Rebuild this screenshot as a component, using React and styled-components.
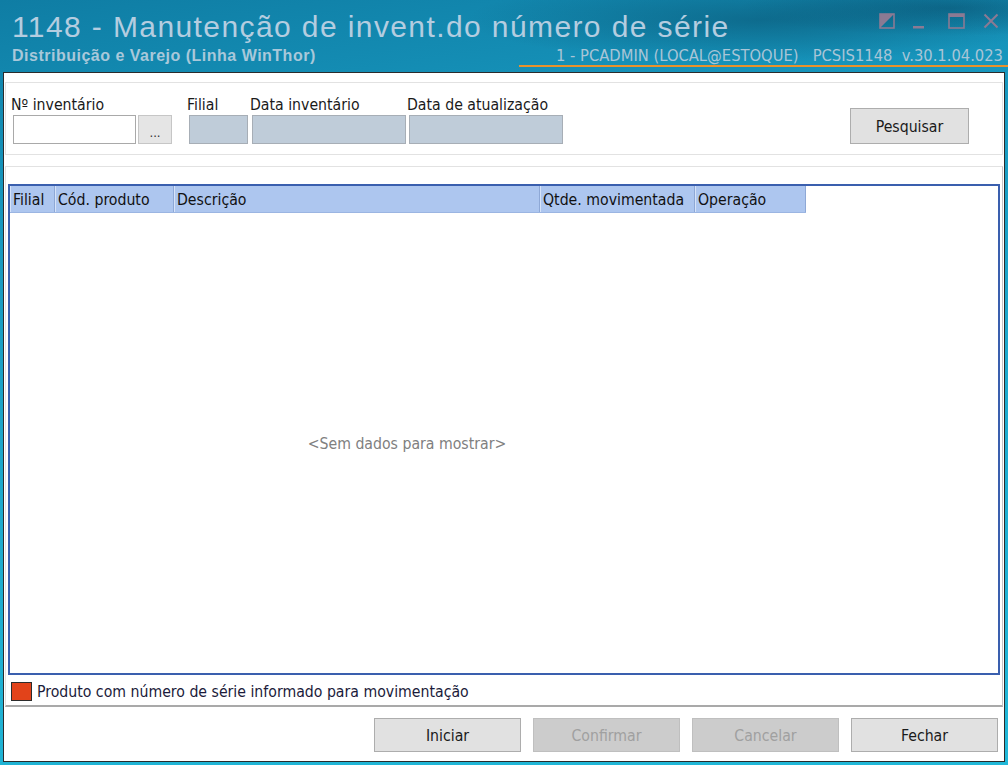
import React from "react";
import styled, { createGlobalStyle } from "styled-components";

const GlobalStyle = createGlobalStyle`
  html, body { margin: 0; padding: 0; }
  body { font-family: "DejaVu Sans Condensed", "DejaVu Sans", sans-serif; }
  * { box-sizing: border-box; }
`;

const uiFont = "15.7px";

const Window = styled.div`
  width: 1008px;
  height: 765px;
  display: flex;
  flex-direction: column;
  overflow: hidden;
  background:
    radial-gradient(ellipse 420px 60px at 760px 20px, rgba(8, 80, 110, 0.55), rgba(8, 80, 110, 0) 70%),
    radial-gradient(ellipse 300px 40px at 950px 8px, rgba(6, 70, 100, 0.5), rgba(6, 70, 100, 0) 70%),
    linear-gradient(172deg, #0f7da4 0%, #1796bd 22%, #1eaacd 55%, #21b8d8 100%);
`;

const TitleBar = styled.header`
  height: 72px;
  flex: none;
  display: flex;
  flex-direction: column;
`;

const TitleRow = styled.div`
  display: flex;
  align-items: flex-start;
  justify-content: space-between;
  height: 46px;
  padding: 11px 9px 0 12px;
`;

const Title = styled.h1`
  margin: 0;
  font-family: "Liberation Sans", Arial, sans-serif;
  font-weight: normal;
  font-size: 30px;
  letter-spacing: 1.4px;
  line-height: 32px;
  color: #b4cde0;
  white-space: nowrap;
`;

const Controls = styled.div`
  display: flex;
  align-items: flex-start;
  margin-top: 2px;
`;

const ControlButton = styled.span`
  display: flex;
  margin-left: ${(p) => p.$gap || 0}px;
`;

const SubRow = styled.div`
  display: flex;
  align-items: flex-end;
  justify-content: space-between;
  padding-left: 12px;
  height: 26px;
`;

const Subtitle = styled.div`
  font-family: "Liberation Sans", Arial, sans-serif;
  font-weight: bold;
  font-size: 16px;
  letter-spacing: 0.5px;
  line-height: 18px;
  color: #a9c8da;
  padding-bottom: 7px;
  white-space: nowrap;
`;

const SessionInfo = styled.div`
  width: 489px;
  border-bottom: 2px solid #e8922c;
  font-family: "Liberation Sans Narrow", "DejaVu Sans Condensed", sans-serif;
  font-stretch: condensed;
  font-size: 16.4px;
  line-height: 18px;
  color: #a9c5d7;
  text-align: right;
  padding: 0 5px 0 0;
  white-space: pre;
  margin-bottom: 5px;
`;

const Body = styled.main`
  flex: 1;
  margin: 0 3px 3px 3px;
  border: 1px solid #2b2b2b;
  background: #ffffff;
  display: flex;
  flex-direction: column;
  padding: 9px 1px 9px 1px;
  gap: 11px;
`;

const Panel = styled.section`
  border: 1px solid #e2e2e2;
  display: flex;
`;

const SearchPanel = styled(Panel)`
  height: 73px;
  padding: 12px 33px 10px 7px;
  align-items: flex-end;
`;

const Fields = styled.div`
  display: flex;
  align-items: flex-end;
  flex: 1;
`;

const Field = styled.div`
  display: flex;
  flex-direction: column;
  margin-left: ${(p) => p.$gap || 0}px;
`;

const Label = styled.label`
  font-size: ${uiFont};
  line-height: 19px;
  color: #1a1a1a;
  margin-left: -2px;
  margin-bottom: 1px;
  white-space: nowrap;
`;

const InputRow = styled.div`
  display: flex;
  gap: 2px;
`;

const TextBox = styled.div`
  width: ${(p) => p.$w}px;
  height: 29px;
  border: 1px solid ${(p) => (p.$readOnly ? "#a7aeb6" : "#a9a9a9")};
  background: ${(p) => (p.$readOnly ? "#bfccd9" : "#ffffff")};
`;

const Ellipsis = styled.button`
  width: 34px;
  height: 29px;
  border: 1px solid #c6c6c6;
  background: #e5e5e5;
  font-family: inherit;
  font-size: 13px;
  color: #333;
  padding: 6px 0 0;
  line-height: 14px;
`;

const Button = styled.button`
  width: ${(p) => p.$w || 147}px;
  height: ${(p) => p.$h || 34}px;
  border: 1px solid ${(p) => (p.disabled ? "#bfbfbf" : "#adadad")};
  background: ${(p) => (p.disabled ? "#cccccc" : "#e1e1e1")};
  color: ${(p) => (p.disabled ? "#a0a0a0" : "#1a1a1a")};
  font-family: inherit;
  font-size: ${uiFont};
  padding: 0;
`;

const GridPanel = styled(Panel)`
  flex: 1;
  min-height: 0;
  flex-direction: column;
  border-right-color: #c4c4c4;
  border-bottom: 2px solid #a9a9a9;
  padding: 17px 2px 0 2px;
`;

const Grid = styled.div`
  flex: 1;
  border: 2px solid #3a5fae;
  display: flex;
  flex-direction: column;
`;

const HeaderRow = styled.div`
  display: flex;
  height: 27px;
  width: fit-content;
  background: #adc6ef;
  border-bottom: 1px solid #9bb5e2;
`;

const HeaderCell = styled.div`
  width: ${(p) => p.$w}px;
  border-right: 1px solid #8ea8d6;
  box-shadow: inset 1px 0 0 #d6e3f9;
  font-size: ${uiFont};
  line-height: 27px;
  padding-left: 3px;
  color: #111;
  white-space: nowrap;
  overflow: hidden;
`;

const EmptyArea = styled.div`
  flex: 1;
  width: 794px;
  display: flex;
  align-items: center;
  justify-content: center;
  font-size: ${uiFont};
  color: #808080;
`;

const Legend = styled.div`
  display: flex;
  align-items: center;
  gap: 5px;
  height: 30px;
  padding: 3px 0 0 3px;
  font-size: ${uiFont};
  color: #1b1b3a;
`;

const Swatch = styled.span`
  width: 21px;
  height: 19px;
  background: ${(p) => p.$color};
  border: 1px solid #2c2c2c;
`;

const Actions = styled.footer`
  display: flex;
  justify-content: flex-end;
  gap: 12px;
  padding-right: 5px;
`;

const iconColor = "#8b7a93";

const RestoreIcon = () => (
  <svg width="16" height="16" viewBox="0 0 16 16">
    <path d="M1 1 H15 L1 15 Z" fill={iconColor} />
    <rect x="1" y="1" width="14" height="14" fill="none" stroke={iconColor} strokeWidth="1.6" />
  </svg>
);

const MinimizeIcon = () => (
  <svg width="12" height="16" viewBox="0 0 12 16">
    <rect x="0" y="13" width="11" height="2.5" fill={iconColor} />
  </svg>
);

const MaximizeIcon = () => (
  <svg width="17" height="16" viewBox="0 0 17 16">
    <rect x="1" y="1" width="15" height="14" fill="none" stroke={iconColor} strokeWidth="1.6" />
    <rect x="1" y="1" width="15" height="3" fill={iconColor} />
  </svg>
);

const CloseIcon = () => (
  <svg width="16" height="16" viewBox="0 0 16 16">
    <path d="M1.5 1.5 L14.5 14.5 M14.5 1.5 L1.5 14.5" stroke={iconColor} strokeWidth="2" />
  </svg>
);

const columns = [
  { title: "Filial", w: 45 },
  { title: "Cód. produto", w: 119 },
  { title: "Descrição", w: 366 },
  { title: "Qtde. movimentada", w: 155 },
  { title: "Operação", w: 111 },
];

export default function App() {
  return (
    <>
      <GlobalStyle />
      <Window>
        <TitleBar>
          <TitleRow>
            <Title>1148 - Manutenção de invent.do número de série</Title>
            <Controls>
              <ControlButton><RestoreIcon /></ControlButton>
              <ControlButton $gap={18}><MinimizeIcon /></ControlButton>
              <ControlButton $gap={23}><MaximizeIcon /></ControlButton>
              <ControlButton $gap={18}><CloseIcon /></ControlButton>
            </Controls>
          </TitleRow>
          <SubRow>
            <Subtitle>Distribuição e Varejo (Linha WinThor)</Subtitle>
            <SessionInfo>{"1 - PCADMIN (LOCAL@ESTOQUE)   PCSIS1148  v.30.1.04.023"}</SessionInfo>
          </SubRow>
        </TitleBar>

        <Body>
          <SearchPanel>
            <Fields>
              <Field>
                <Label>Nº inventário</Label>
                <InputRow>
                  <TextBox $w={123} />
                  <Ellipsis>...</Ellipsis>
                </InputRow>
              </Field>
              <Field $gap={17}>
                <Label>Filial</Label>
                <TextBox $w={59} $readOnly />
              </Field>
              <Field $gap={4}>
                <Label>Data inventário</Label>
                <TextBox $w={154} $readOnly />
              </Field>
              <Field $gap={3}>
                <Label>Data de atualização</Label>
                <TextBox $w={154} $readOnly />
              </Field>
            </Fields>
            <Button $w={119} $h={36}>Pesquisar</Button>
          </SearchPanel>

          <GridPanel>
            <Grid>
              <HeaderRow>
                {columns.map((c) => (
                  <HeaderCell key={c.title} $w={c.w}>{c.title}</HeaderCell>
                ))}
              </HeaderRow>
              <EmptyArea>&lt;Sem dados para mostrar&gt;</EmptyArea>
            </Grid>
            <Legend>
              <Swatch $color="#e2431a" />
              Produto com número de série informado para movimentação
            </Legend>
          </GridPanel>

          <Actions>
            <Button>Iniciar</Button>
            <Button disabled>Confirmar</Button>
            <Button disabled>Cancelar</Button>
            <Button>Fechar</Button>
          </Actions>
        </Body>
      </Window>
    </>
  );
}
